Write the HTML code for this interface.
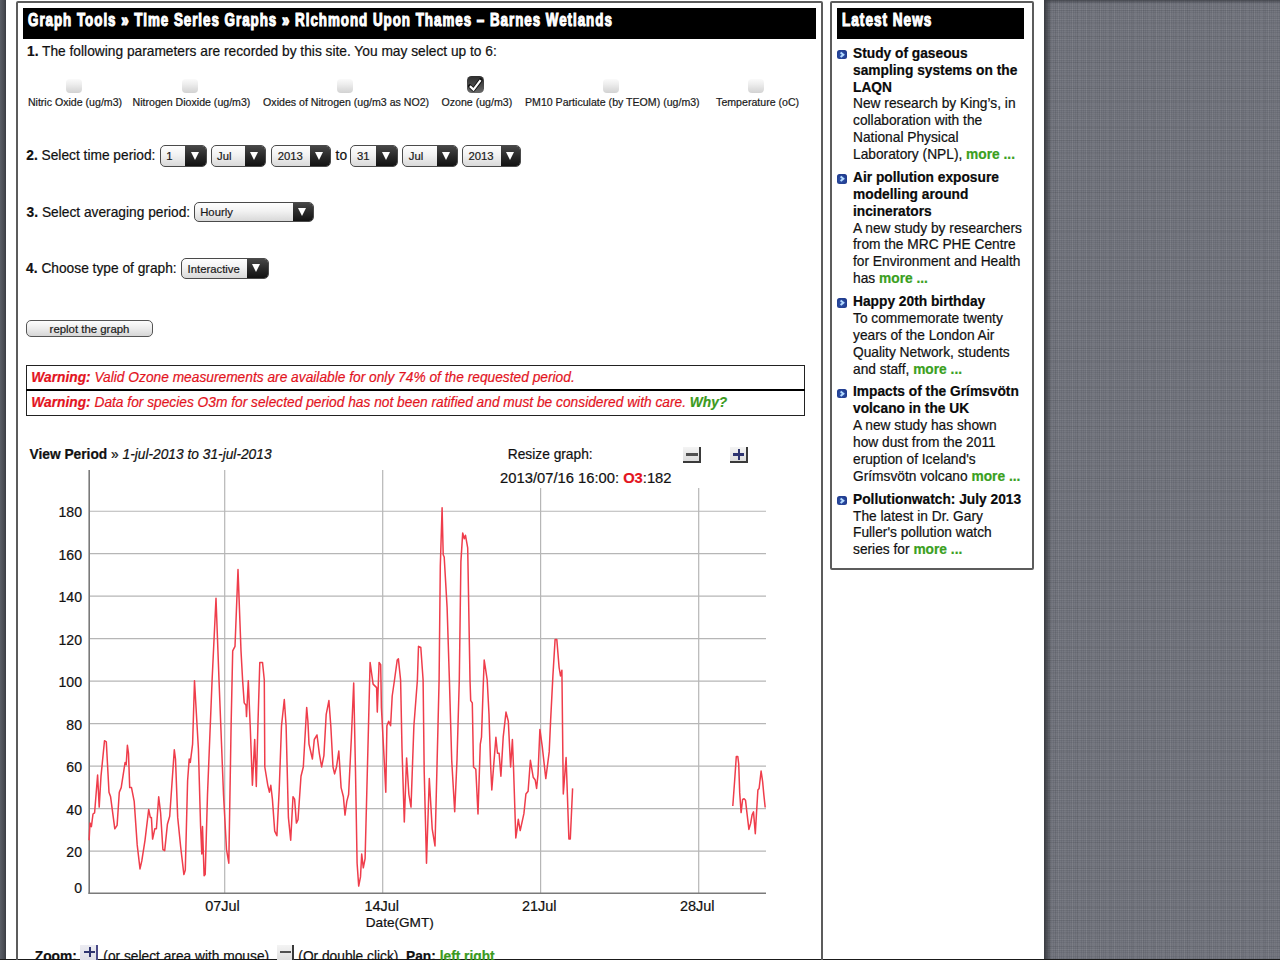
<!DOCTYPE html>
<html><head><meta charset="utf-8">
<style>
html,body{margin:0;padding:0;width:1280px;height:960px;overflow:hidden;}
body{background:#6b6e77;font-family:"Liberation Sans",sans-serif;color:#111;position:relative;-webkit-text-stroke:0.2px currentColor;}
.linen{position:absolute;left:1044px;top:0;width:236px;height:960px;
 background:
  linear-gradient(180deg, rgba(40,42,48,0.55), rgba(40,42,48,0) 4px),
  repeating-linear-gradient(90deg, rgba(255,255,255,0.05) 0 1px, rgba(0,0,0,0) 1px 7px),
  repeating-linear-gradient(90deg, rgba(0,0,0,0.04) 0 1px, rgba(0,0,0,0) 1px 11px),
  repeating-linear-gradient(0deg, rgba(255,255,255,0.045) 0 1px, rgba(0,0,0,0) 1px 5px),
  repeating-linear-gradient(0deg, rgba(0,0,0,0.04) 0 1px, rgba(0,0,0,0) 1px 13px),
  repeating-linear-gradient(90deg, rgba(255,255,255,0.03) 0 1px, rgba(0,0,0,0.03) 1px 2px),
  repeating-linear-gradient(0deg, rgba(255,255,255,0.03) 0 1px, rgba(0,0,0,0.03) 1px 2px),
  #6d7079;}
.linen:before{content:"";position:absolute;left:0;top:0;width:8px;height:100%;background:linear-gradient(90deg,#393b41,rgba(57,59,65,0));}
.lstrip{position:absolute;left:0;top:0;width:6px;height:960px;background:linear-gradient(90deg,#5a5e66,#4a4d54 60%,#3a3c42);}
.page{position:absolute;left:6px;top:0;width:1038px;height:958.5px;background:#fff;}
.bottomline{position:absolute;left:0;top:958.5px;width:1280px;height:1.5px;background:#1a1a1a;}
.box{position:absolute;border:2px solid #5c5c5c;border-radius:2px;}
.bar{position:absolute;background:#000;}
.ttl{position:absolute;color:#fff;font-weight:bold;white-space:nowrap;transform-origin:0 0;-webkit-text-stroke:1.1px #fff;letter-spacing:1.3px;}
.t{position:absolute;white-space:nowrap;}
.sel{position:absolute;box-sizing:border-box;border:1.5px solid #4a4a4a;border-radius:5px;overflow:hidden;background:linear-gradient(#fefefe,#f2f2f2 45%,#d9d9d9);}
.st{position:absolute;top:0;color:#1a1a1a;}
.sd{position:absolute;right:0;top:0;bottom:0;background:linear-gradient(#474747,#2a2a2a 50%,#121212);}
.sd i{position:absolute;left:50%;top:50%;margin-left:-5px;margin-top:-3.8px;width:0;height:0;border-left:4.8px solid transparent;border-right:4.8px solid transparent;border-top:8px solid #fff;}
.cb{position:absolute;width:16px;height:14px;border-radius:4px;background:linear-gradient(#fafafa,#ececec 40%,#d2d2d2);}
.cbk{position:absolute;width:17px;height:17px;border-radius:4.5px;background:linear-gradient(#2e2e2e,#4a4a4a 55%,#6a6a6a);}
.ol{position:absolute;font-size:10.6px;line-height:12px;white-space:nowrap;color:#1a1a1a;}
.warn{color:#e3141e;font-style:italic;}
.green{color:#3a9a1d;}
.yl{position:absolute;left:40px;width:42px;text-align:right;font-size:14.1px;line-height:19px;color:#111;}
.xl{position:absolute;font-size:14.45px;line-height:19px;color:#111;white-space:nowrap;}
.news{position:absolute;left:853px;top:45.8px;width:180px;font-size:13.75px;line-height:16.875px;color:#111;}
.news .it{position:relative;margin-bottom:6px;}
.news .it b{color:#0a0a0a;}
.news .ic{position:absolute;left:-16.4px;top:4.3px;width:10px;height:9.4px;border-radius:2.5px;background:radial-gradient(circle at 45% 55%,#3358b0,#1f3a8c 75%);}
.news .ic svg{position:absolute;left:0;top:0;}
.news .more{color:#3aa01d;font-weight:bold;}
.btn{position:absolute;box-sizing:border-box;border:1.5px solid #555;border-radius:5px;background:linear-gradient(#fdfdfd,#ececec 50%,#d6d6d6);text-align:center;font-size:11.4px;color:#1a1a1a;}
.rbtn{position:absolute;width:18px;height:16.5px;box-sizing:border-box;background:linear-gradient(#f4f4f4,#dcdcdc);border-right:2px solid #3a3a3a;border-bottom:2px solid #3a3a3a;}
</style></head><body>
<div class="lstrip"></div>
<div class="linen"></div>
<div class="page"></div>
<div class="bottomline"></div>

<!-- main panel -->
<div class="box" style="left:16px;top:1px;width:803px;height:1000px;"></div>
<div class="bar" style="left:23px;top:8px;width:792.5px;height:31px;"></div>
<div class="ttl" style="left:28px;top:9.6px;font-size:17.8px;line-height:20px;transform:scaleX(0.752);">Graph Tools » Time Series Graphs » Richmond Upon Thames – Barnes Wetlands</div>

<!-- news panel -->
<div class="box" style="left:830px;top:1px;width:199.6px;height:565px;"></div>
<div class="bar" style="left:837px;top:8px;width:187px;height:31px;"></div>
<div class="ttl" style="left:842px;top:9.6px;font-size:17.8px;line-height:20px;transform:scaleX(0.765);">Latest News</div>

<div class="t " style="left:27px;top:42.94px;font-size:13.75px;line-height:18px;"><b>1.</b> The following parameters are recorded by this site. You may select up to 6:</div>

<div class="cb" style="left:65.5px;top:78.5px"></div>
<div class="cb" style="left:182px;top:78.5px"></div>
<div class="cb" style="left:336.5px;top:78.5px"></div>
<div class="cbk" style="left:467px;top:76.3px"><svg width="17" height="17" viewBox="0 0 17 17" style="position:absolute;left:0;top:0"><path d="M2.9,10.1 L6.5,13.6 L13.6,4.2" fill="none" stroke="#111" stroke-width="4" stroke-linecap="round" stroke-linejoin="round"/><path d="M2.9,10.1 L6.5,13.6 L13.6,4.2" fill="none" stroke="#fff" stroke-width="2.2" stroke-linecap="butt" stroke-linejoin="miter"/></svg></div>
<div class="cb" style="left:603px;top:78.5px"></div>
<div class="cb" style="left:748px;top:78.5px"></div>

<div class="ol" style="left:27.9px;top:95.9px">Nitric Oxide (ug/m3)</div>
<div class="ol" style="left:132.6px;top:95.9px">Nitrogen Dioxide (ug/m3)</div>
<div class="ol" style="left:263.1px;top:95.9px">Oxides of Nitrogen (ug/m3 as NO2)</div>
<div class="ol" style="left:441.5px;top:95.9px">Ozone (ug/m3)</div>
<div class="ol" style="left:525px;top:95.9px">PM10 Particulate (by TEOM) (ug/m3)</div>
<div class="ol" style="left:716.1px;top:95.9px">Temperature (oC)</div>

<div class="t " style="left:26.25px;top:147.44px;font-size:13.75px;line-height:18px;"><b>2.</b> Select time period:</div>
<div class="sel" style="left:159.7px;top:145px;width:47.3px;height:21.5px"><span class="st" style="left:5.5px;top:1.2px;font-size:11.3px;line-height:18.5px">1</span><div class="sd" style="width:20.5px"><i></i></div></div>
<div class="sel" style="left:210.6px;top:145px;width:55px;height:21.5px"><span class="st" style="left:5.5px;top:1.2px;font-size:11.3px;line-height:18.5px">Jul</span><div class="sd" style="width:19.700000000000017px"><i></i></div></div>
<div class="sel" style="left:271.25px;top:145px;width:59.4px;height:21.5px"><span class="st" style="left:5.5px;top:1.2px;font-size:11.3px;line-height:18.5px">2013</span><div class="sd" style="width:19.75px"><i></i></div></div>
<div class="t " style="left:335.6px;top:147.44px;font-size:13.75px;line-height:18px;">to</div>
<div class="sel" style="left:350.4px;top:145px;width:47.2px;height:21.5px"><span class="st" style="left:5.5px;top:1.2px;font-size:11.3px;line-height:18.5px">31</span><div class="sd" style="width:20.099999999999966px"><i></i></div></div>
<div class="sel" style="left:402.3px;top:145px;width:55.7px;height:21.5px"><span class="st" style="left:5.5px;top:1.2px;font-size:11.3px;line-height:18.5px">Jul</span><div class="sd" style="width:20.399999999999977px"><i></i></div></div>
<div class="sel" style="left:462px;top:145px;width:59.3px;height:21.5px"><span class="st" style="left:5.5px;top:1.2px;font-size:11.3px;line-height:18.5px">2013</span><div class="sd" style="width:19.599999999999966px"><i></i></div></div>

<div class="t " style="left:26.6px;top:203.64px;font-size:13.75px;line-height:18px;"><b>3.</b> Select averaging period:</div>
<div class="sel" style="left:193.7px;top:201.6px;width:120.3px;height:20.8px"><span class="st" style="left:5.5px;top:1.2px;font-size:11.3px;line-height:17.8px">Hourly</span><div class="sd" style="width:20.399999999999977px"><i></i></div></div>

<div class="t " style="left:26.1px;top:259.94px;font-size:13.75px;line-height:18px;"><b>4.</b> Choose type of graph:</div>
<div class="sel" style="left:181.1px;top:257.9px;width:87.5px;height:20.8px"><span class="st" style="left:5.5px;top:2.2px;font-size:11.3px;line-height:17.8px">Interactive</span><div class="sd" style="width:20.900000000000034px"><i></i></div></div>

<div class="btn" style="left:26px;top:319.6px;width:127px;height:17px;line-height:16.5px;">replot the graph</div>

<!-- warnings -->
<div style="position:absolute;left:26px;top:364.5px;width:778.5px;height:51.5px;box-sizing:border-box;border:1.5px solid #222;"></div>
<div style="position:absolute;left:26px;top:389px;width:778.5px;height:2.2px;background:#000;"></div>
<div class="t warn" style="left:31.3px;top:369.04px;font-size:13.75px;line-height:18px;"><b>Warning:</b> Valid Ozone measurements are available for only 74% of the requested period.</div>
<div class="t warn" style="left:31.3px;top:394.04px;font-size:13.75px;line-height:18px;"><b>Warning:</b> Data for species O3m for selected period has not been ratified and must be considered with care. <b class="green">Why?</b></div>

<div class="t " style="left:29.5px;top:446.04px;font-size:13.75px;line-height:18px;"><b>View Period</b> » <i>1-jul-2013 to 31-jul-2013</i></div>
<div class="t " style="left:507.8px;top:446.04px;font-size:13.75px;line-height:18px;">Resize graph:</div>
<div class="rbtn" style="left:683px;top:446.6px"><div style="position:absolute;left:3.2px;top:6.8px;width:11.5px;height:2.2px;background:#505050"></div></div>
<div class="rbtn" style="left:729.5px;top:446.6px"><div style="position:absolute;left:3.8px;top:6.8px;width:11px;height:2.2px;background:#2e3470"></div><div style="position:absolute;left:8.4px;top:2.8px;width:2.2px;height:10.3px;background:#2e3470"></div></div>


<!-- chart -->
<svg style="position:absolute;left:0;top:0" width="1280" height="960" viewBox="0 0 1280 960">
<line x1="89" y1="851.03" x2="766" y2="851.03" stroke="#b6b6b6" stroke-width="1.2"/>
<line x1="89" y1="808.56" x2="766" y2="808.56" stroke="#b6b6b6" stroke-width="1.2"/>
<line x1="89" y1="766.08" x2="766" y2="766.08" stroke="#b6b6b6" stroke-width="1.2"/>
<line x1="89" y1="723.61" x2="766" y2="723.61" stroke="#b6b6b6" stroke-width="1.2"/>
<line x1="89" y1="681.14" x2="766" y2="681.14" stroke="#b6b6b6" stroke-width="1.2"/>
<line x1="89" y1="638.67" x2="766" y2="638.67" stroke="#b6b6b6" stroke-width="1.2"/>
<line x1="89" y1="596.20" x2="766" y2="596.20" stroke="#b6b6b6" stroke-width="1.2"/>
<line x1="89" y1="553.72" x2="766" y2="553.72" stroke="#b6b6b6" stroke-width="1.2"/>
<line x1="89" y1="511.25" x2="766" y2="511.25" stroke="#b6b6b6" stroke-width="1.2"/>
<line x1="224.7" y1="470" x2="224.7" y2="893" stroke="#b6b6b6" stroke-width="1.2"/>
<line x1="382.7" y1="470" x2="382.7" y2="893" stroke="#b6b6b6" stroke-width="1.2"/>
<line x1="540.6" y1="470" x2="540.6" y2="893" stroke="#b6b6b6" stroke-width="1.2"/>
<line x1="698.7" y1="470" x2="698.7" y2="893" stroke="#b6b6b6" stroke-width="1.2"/>
<line x1="89.2" y1="470" x2="89.2" y2="893.8" stroke="#7a7a7a" stroke-width="1.6"/>
<line x1="88.4" y1="893.2" x2="766" y2="893.2" stroke="#7a7a7a" stroke-width="1.6"/>
<path d="M89.1,840.3 L90.0,823.1 L91.4,826.6 L93.0,814.0 L94.6,812.8 L97.6,775.0 L99.2,807.1 L101.0,776.2 L104.5,740.7 L106.3,741.8 L109.0,792.2 L110.6,796.8 L114.8,828.8 L117.1,825.4 L119.3,792.2 L121.2,787.6 L125.1,762.4 L126.2,764.7 L127.4,745.3 L128.5,753.3 L129.7,787.6 L131.5,787.6 L134.2,801.4 L137.2,844.9 L140.0,868.9 L141.8,860.9 L145.0,840.3 L148.7,809.4 L150.3,817.4 L151.4,817.4 L152.6,839.1 L154.8,828.8 L156.4,828.8 L158.7,796.8 L160.6,812.8 L162.9,849.5 L164.7,850.6 L167.4,824.3 L169.7,816.2 L174.3,749.8 L175.5,759.0 L177.7,817.4 L178.4,824.3 L180.7,847.2 L183.9,874.6 L185.3,870.1 L187.6,780.8 L189.2,759.0 L190.3,762.4 L192.6,744.1 L194.5,680.7 L198.4,748.7 L200.6,826.6 L201.8,854.0 L202.5,826.6 L204.1,875.8 L205.2,874.6 L207.5,794.5 L212.1,680.0 L216.0,598.3 L219.0,680.0 L223.5,794.5 L226.5,849.5 L228.8,863.2 L231.1,725.8 L232.7,650.9 L235.0,646.3 L238.0,569.6 L241.0,650.9 L242.6,680.0 L244.2,702.9 L246.0,705.2 L246.5,716.6 L248.3,680.7 L250.2,725.8 L252.4,785.3 L254.7,739.5 L256.3,786.5 L257.9,725.8 L259.8,662.4 L262.5,662.4 L264.3,680.0 L264.8,767.0 L267.8,785.3 L269.4,792.2 L270.8,785.3 L272.4,799.1 L274.7,831.1 L276.9,835.7 L279.2,789.9 L281.5,725.8 L284.3,699.5 L286.1,725.8 L288.4,817.4 L290.7,840.3 L293.0,796.8 L294.6,799.1 L296.4,823.1 L298.0,819.7 L301.0,776.2 L303.3,767.0 L306.7,707.5 L307.9,721.2 L309.0,744.1 L312.4,759.0 L314.3,739.5 L317.0,735.0 L319.3,753.3 L321.6,767.0 L323.9,755.6 L326.2,714.3 L328.9,700.6 L330.8,725.8 L333.0,767.0 L334.6,773.9 L336.5,767.0 L338.8,751.0 L341.1,787.6 L343.4,796.8 L345.0,815.1 L346.8,801.4 L348.6,794.5 L351.4,737.2 L353.7,683.0 L355.5,771.6 L357.1,863.2 L358.7,886.1 L360.5,876.9 L361.7,854.0 L363.3,867.8 L365.1,858.6 L368.5,725.8 L370.1,662.4 L373.1,684.1 L376.6,687.6 L377.3,712.1 L379.1,662.4 L380.7,664.7 L381.4,707.5 L384.2,760.1 L385.8,792.2 L386.9,725.8 L388.7,721.2 L390.6,725.8 L392.2,696.0 L394.5,680.0 L397.2,660.1 L398.4,658.9 L400.6,680.0 L402.0,748.7 L404.3,822.0 L406.6,757.9 L408.9,794.5 L411.0,807.1 L413.9,725.8 L417.4,680.0 L418.5,646.3 L420.8,647.5 L423.1,680.0 L424.2,771.6 L426.5,863.2 L429.3,778.5 L432.2,828.8 L435.0,846.0 L438.0,725.8 L439.1,680.0 L440.3,566.2 L442.1,507.8 L443.2,554.7 L444.2,557.0 L447.1,607.4 L449.4,680.0 L451.7,760.1 L454.7,811.7 L457.0,760.1 L459.3,680.0 L460.9,561.6 L462.7,533.0 L464.3,538.7 L465.5,535.3 L467.7,547.9 L470.0,680.0 L470.7,700.6 L472.3,702.9 L473.5,767.0 L475.8,769.3 L478.0,814.0 L480.3,744.1 L481.5,737.2 L483.1,689.8 L484.2,660.1 L485.6,669.2 L487.2,680.0 L489.0,714.3 L490.6,764.7 L491.8,789.9 L494.1,760.1 L495.9,737.2 L497.5,753.3 L499.1,753.3 L500.9,776.2 L503.2,737.2 L506.0,712.1 L508.3,721.2 L510.6,767.0 L512.4,739.5 L513.5,767.0 L515.8,838.0 L516.9,830.6 L518.3,819.3 L520.2,830.6 L523.9,813.7 L525.9,794.0 L528.1,791.2 L530.4,760.3 L533.2,777.2 L535.2,780.0 L536.6,788.4 L538.0,774.4 L539.9,729.4 L542.2,746.2 L545.8,778.6 L549.2,751.9 L550.6,720.9 L552.9,675.9 L555.1,639.4 L556.8,639.4 L559.1,667.5 L560.5,675.9 L561.9,670.3 L563.3,794.0 L566.1,757.5 L568.9,839.0 L570.3,839.0 L572.6,788.4" fill="none" stroke="#ef3d4b" stroke-width="1.5" stroke-linejoin="round"/>
<path d="M732.8,806.0 L734.6,781.3 L736.3,756.5 L737.8,756.5 L738.7,763.8 L739.7,792.9 L741.1,812.6 L742.6,799.5 L744.1,798.8 L745.5,800.2 L747.0,813.3 L748.9,829.4 L750.6,823.5 L752.1,814.8 L753.5,811.9 L755.3,833.8 L756.5,813.3 L757.9,790.0 L759.1,788.5 L761.1,771.0 L762.6,781.3 L763.8,794.4 L765.2,807.5" fill="none" stroke="#ef3d4b" stroke-width="1.5" stroke-linejoin="round"/>
</svg>
<div class="yl" style="top:879.30px">0</div>
<div class="yl" style="top:843.13px">20</div>
<div class="yl" style="top:800.66px">40</div>
<div class="yl" style="top:758.18px">60</div>
<div class="yl" style="top:715.71px">80</div>
<div class="yl" style="top:673.24px">100</div>
<div class="yl" style="top:630.77px">120</div>
<div class="yl" style="top:588.30px">140</div>
<div class="yl" style="top:545.82px">160</div>
<div class="yl" style="top:503.35px">180</div>
<div style="position:absolute;left:494px;top:466px;width:276px;height:22px;background:#fff"></div>
<div class="t " style="left:500.1px;top:469.19px;font-size:14.75px;line-height:19px;">2013/07/16 16:00: <b style="color:#e3141e">O3</b>:182</div>
<div class="xl" style="left:205.2px;top:897px">07Jul</div>
<div class="xl" style="left:364.4px;top:897px">14Jul</div>
<div class="xl" style="left:521.9px;top:897px">21Jul</div>
<div class="xl" style="left:679.9px;top:897px">28Jul</div>
<div class="t " style="left:365.8px;top:913.99px;font-size:13.6px;line-height:18px;">Date(GMT)</div>

<!-- zoom line -->
<div class="t " style="left:34.8px;top:948.24px;font-size:13.75px;line-height:18px;"><b>Zoom:</b></div>
<div class="rbtn" style="left:80.3px;top:945.2px;background:linear-gradient(#ececf2,#dcdce6);border-right-color:#4a4a88;border-bottom:none"><div style="position:absolute;left:3.8px;top:5.8px;width:11px;height:2.2px;background:#2e3470"></div><div style="position:absolute;left:8.4px;top:1.8px;width:2.2px;height:10.3px;background:#2e3470"></div></div>
<div class="t " style="left:103.3px;top:948.24px;font-size:13.75px;line-height:18px;">(or select area with mouse)</div>
<div class="rbtn" style="left:276.8px;top:945.2px;width:17px;border-bottom:none"><div style="position:absolute;left:3px;top:6px;width:11px;height:2.2px;background:#505050"></div></div>
<div class="t " style="left:298.3px;top:948.24px;font-size:13.75px;line-height:18px;">(Or double click)&nbsp; <b>Pan:</b> <b class="green">left right</b></div>

<!-- news -->
<div class="news">
<div class="it"><span class="ic"><svg width="10" height="9.4" viewBox="0 0 10 9.4"><path d="M3.6,2.5 L6.4,4.8 L3.6,7.1" fill="none" stroke="#b6dcff" stroke-width="1.9"/></svg></span><b>Study of gaseous<br>sampling systems on the<br>LAQN</b><br>New research by King’s, in<br>collaboration with the<br>National Physical<br>Laboratory (NPL), <span class="more">more ...</span></div>
<div class="it"><span class="ic"><svg width="10" height="9.4" viewBox="0 0 10 9.4"><path d="M3.6,2.5 L6.4,4.8 L3.6,7.1" fill="none" stroke="#b6dcff" stroke-width="1.9"/></svg></span><b>Air pollution exposure<br>modelling around<br>incinerators</b><br>A new study by researchers<br>from the MRC PHE Centre<br>for Environment and Health<br>has <span class="more">more ...</span></div>
<div class="it"><span class="ic"><svg width="10" height="9.4" viewBox="0 0 10 9.4"><path d="M3.6,2.5 L6.4,4.8 L3.6,7.1" fill="none" stroke="#b6dcff" stroke-width="1.9"/></svg></span><b>Happy 20th birthday</b><br>To commemorate twenty<br>years of the London Air<br>Quality Network, students<br>and staff, <span class="more">more ...</span></div>
<div class="it"><span class="ic"><svg width="10" height="9.4" viewBox="0 0 10 9.4"><path d="M3.6,2.5 L6.4,4.8 L3.6,7.1" fill="none" stroke="#b6dcff" stroke-width="1.9"/></svg></span><b>Impacts of the Grímsvötn<br>volcano in the UK</b><br>A new study has shown<br>how dust from the 2011<br>eruption of Iceland's<br>Grímsvötn volcano <span class="more">more ...</span></div>
<div class="it"><span class="ic"><svg width="10" height="9.4" viewBox="0 0 10 9.4"><path d="M3.6,2.5 L6.4,4.8 L3.6,7.1" fill="none" stroke="#b6dcff" stroke-width="1.9"/></svg></span><b>Pollutionwatch: July 2013</b><br>The latest in Dr. Gary<br>Fuller's pollution watch<br>series for <span class="more">more ...</span></div>
</div>
</body></html>
